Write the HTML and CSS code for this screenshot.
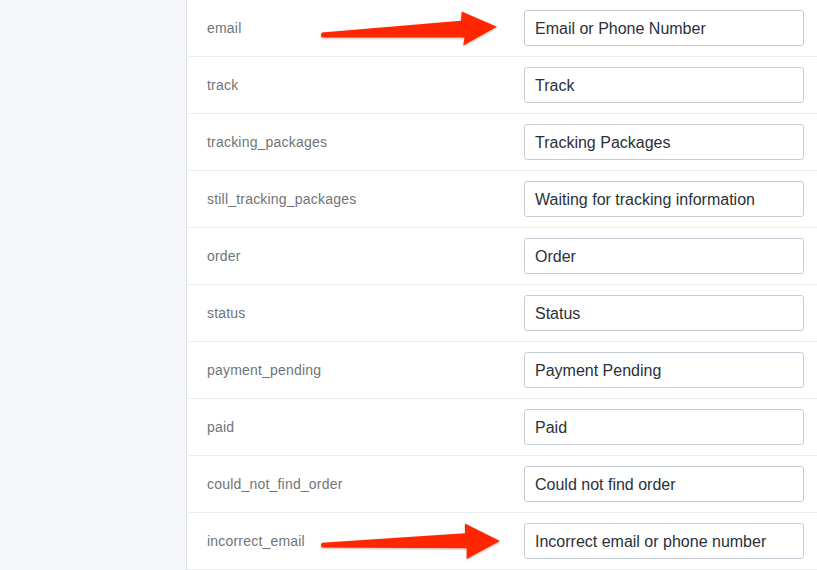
FILE: index.html
```html
<!DOCTYPE html>
<html>
<head>
<meta charset="utf-8">
<link rel="stylesheet" href="styles.css">
</head>
<body>
<div class="page">
  <aside class="sidebar"></aside>
  <main class="panel">
    <div class="row"><span class="label">email</span><div class="field">Email or Phone Number</div></div>
    <div class="row"><span class="label">track</span><div class="field">Track</div></div>
    <div class="row"><span class="label">tracking_packages</span><div class="field">Tracking Packages</div></div>
    <div class="row"><span class="label">still_tracking_packages</span><div class="field">Waiting for tracking information</div></div>
    <div class="row"><span class="label">order</span><div class="field">Order</div></div>
    <div class="row"><span class="label">status</span><div class="field">Status</div></div>
    <div class="row"><span class="label">payment_pending</span><div class="field">Payment Pending</div></div>
    <div class="row"><span class="label">paid</span><div class="field">Paid</div></div>
    <div class="row"><span class="label">could_not_find_order</span><div class="field">Could not find order</div></div>
    <div class="row"><span class="label">incorrect_email</span><div class="field">Incorrect email or phone number</div></div>
  </main>
  <svg class="arrows" width="817" height="570" viewBox="0 0 817 570">
    <defs>
      <filter id="sh" x="-10%" y="-50%" width="120%" height="200%">
        <feDropShadow dx="0" dy="1" stdDeviation="1" flood-color="#000" flood-opacity="0.3"/>
      </filter>
    </defs>
    <path filter="url(#sh)" fill="#ff2700" d="M322 32.6 L461 20.8 L461.7 11.5 L497 26.8 L463.3 45.6 L464.5 37.4 L322 37.4 Q320 35 322 32.6 Z"/>
    <path filter="url(#sh)" fill="#ff2700" d="M322 542.7 L465 533.3 L465 523.5 L500 541 L466.7 559 L466.7 548.2 L322 547.4 Q320 545 322 542.7 Z"/>
  </svg>
</div>
</body>
</html>
```
FILE: styles.css
```css
html, body {
  margin: 0;
  padding: 0;
  background: #ffffff;
}
.page {
  position: relative;
  display: flex;
  width: 817px;
  height: 570px;
  overflow: hidden;
  font-family: "Liberation Sans", Arial, sans-serif;
}
.sidebar {
  width: 186px;
  flex: none;
  background: #f4f6f8;
  border-right: 1px solid #dfe3e8;
}
.panel {
  flex: 1;
  display: flex;
  flex-direction: column;
  background: #ffffff;
}
.row {
  height: 56px;
  flex: none;
  border-bottom: 1px solid #ebeef0;
  display: flex;
  align-items: center;
  justify-content: space-between;
  padding: 0 13px 0 20px;
}
.label {
  font-size: 14px;
  letter-spacing: 0.2px;
  color: #707478;
}
.field {
  box-sizing: border-box;
  width: 280px;
  height: 36px;
  border: 1px solid #c4cdd5;
  border-radius: 3px;
  padding: 1px 10px 0 10px;
  display: flex;
  align-items: center;
  font-size: 16px;
  color: #2a3139;
  background: #fff;
}
.arrows {
  position: absolute;
  left: 0;
  top: 0;
  pointer-events: none;
}
```
